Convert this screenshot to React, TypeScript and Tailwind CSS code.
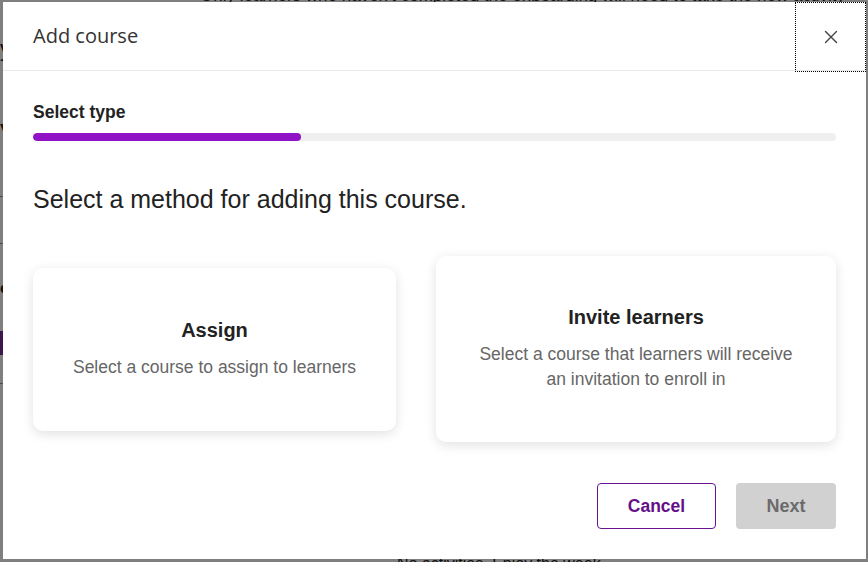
import { X } from "lucide-react";

export default function App() {
  return (
    <div className="relative w-[868px] h-[562px] overflow-hidden bg-white" style={{ fontFamily: '"Liberation Sans", Arial, sans-serif' }}>
      {/* page behind the dialog */}
      <div className="flex flex-col h-full text-[#222]">
        <p className="mt-[-17px] pl-[200px] text-[17px] whitespace-nowrap">Only learners who haven't completed the onboarding will need to take the new activity</p>
        <div className="mt-[29px] text-[22px] leading-none">y</div>
        <div className="mt-[60px] text-[26px] leading-none">V</div>
        <div className="mt-[50px] border-t border-[#999] w-[10px]" />
        <div className="mt-[46px] border-t border-[#999] w-[10px]" />
        <div className="mt-[36px] text-[15px] font-bold leading-none">e</div>
        <div className="mt-[36px] h-[24px] w-[6px] bg-[#7b2a9e]" />
        <div className="mt-[28px] border-t border-[#999] w-[10px]" />
        <p className="mt-auto mb-[-14px] pl-[397px] text-[16px] whitespace-nowrap">No activities. Enjoy the week.</p>
      </div>
      <div className="absolute inset-0 bg-black/50" />

      {/* dialog */}
      <div className="absolute left-[3px] top-[2px] w-[863px] h-[557px] bg-white flex flex-col">
        <div className="h-[69px] border-b border-[#e8e8e8] flex items-start justify-between">
          <h1 className="pl-[30px] pt-[21px] text-[20px] leading-[26px] text-[#333]" style={{ fontFamily: '"Open Sans", sans-serif' }}>Add course</h1>
          <button className="w-[71px] h-[70px] flex items-center justify-center outline outline-1 outline-dotted outline-black -outline-offset-1 text-[#444]">
            <X size={22} strokeWidth={1.5} />
          </button>
        </div>

        <div className="px-[30px] pt-[32px] flex flex-col flex-1">
          <div className="text-[17.5px] leading-[18px] font-bold text-[#222]">Select type</div>
          <div className="mt-[12px] h-[8px] w-full rounded-full bg-[#efefef] overflow-hidden">
            <div className="h-full w-1/3 rounded-full bg-[#9113c6]" />
          </div>

          <h2 className="mt-[44px] text-[25px] leading-[28px] text-[#222]">Select a method for adding this course.</h2>

          <div className="mt-[43px] flex items-center gap-[40px]">
            <div className="w-[363px] h-[163px] rounded-[10px] bg-white shadow-[0_3px_12px_rgba(0,0,0,0.12)] flex flex-col items-center justify-center text-center">
              <div className="text-[20px] leading-[22px] font-bold text-[#222]">Assign</div>
              <div className="mt-[14px] text-[17.5px] leading-[25px] text-[#666]">Select a course to assign to learners</div>
            </div>
            <div className="w-[400px] h-[186px] rounded-[10px] bg-white shadow-[0_3px_12px_rgba(0,0,0,0.12)] flex flex-col items-center justify-center text-center">
              <div className="text-[20px] leading-[22px] font-bold text-[#222]">Invite learners</div>
              <div className="mt-[14px] text-[17.5px] leading-[25px] text-[#666] w-[322px]">Select a course that learners will receive an invitation to enroll in</div>
            </div>
          </div>

          <div className="mt-auto mb-[30px] flex justify-end gap-[20px]">
            <button className="w-[119px] h-[46px] rounded-[4px] border border-[#6b1290] text-[#650f88] text-[17.5px] font-bold">Cancel</button>
            <button className="w-[100px] h-[46px] rounded-[4px] bg-[#d1d1d1] text-[#6b6b6b] text-[18px] font-bold">Next</button>
          </div>
        </div>
      </div>
    </div>
  );
}
